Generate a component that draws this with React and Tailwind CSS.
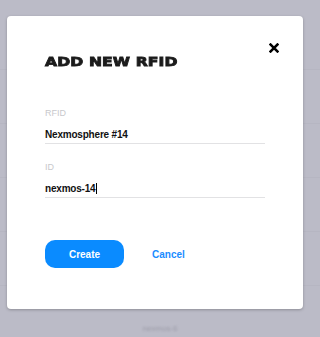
import React, { useState } from "react";

/* ---------- background rows behind the modal (only the last one peeks out) ---------- */
const ROWS = ["", "", "", "", "", "nexmos-6"];

function Field({ label, value, caret = false }) {
  return (
    <div className="flex flex-col">
      <div className="text-[9px] leading-[11px] text-[#c8c8cc]">{label}</div>
      <div className="mt-[9px] flex items-center h-[12px] text-[10px] font-bold text-[#111] tracking-[-0.2px]">
        {value}
        {caret ? <span className="ml-[1px] inline-block w-px h-[11px] bg-black" /> : null}
      </div>
      <div className="mt-[3px] h-px w-[220px] bg-[#e2e2e4]" />
    </div>
  );
}

export default function App() {
  const [rfid] = useState("Nexmosphere #14");
  const [id] = useState("nexmos-14");

  return (
    <div
      className="relative w-[320px] h-[337px] overflow-hidden bg-[#bbbbc7]"
      style={{ fontFamily: '"Liberation Sans", Arial, sans-serif' }}
    >
      {/* list underneath */}
      <div className="flex flex-col pt-[16px]">
        {ROWS.map((r, i) => (
          <div key={i} className="h-[54px] flex items-end justify-center pb-[4px] border-b border-[#b6b6c2]">
            {r ? <span className="text-[8px] text-[#9c9ca8] blur-[1px]">{r}</span> : null}
          </div>
        ))}
      </div>

      {/* modal */}
      <div className="absolute left-[7px] top-[16px] w-[296px] h-[293px] rounded-[4px] bg-white shadow-[0_1px_3px_rgba(0,0,0,0.25)]">
        <button type="button" className="absolute left-[255px] top-[20px] p-[7px]">
          <svg width="10" height="10" viewBox="0 0 10 10" className="block">
            <path d="M1.6 1.6 L8.4 8.4 M8.4 1.6 L1.6 8.4" stroke="#000" strokeWidth="2.6" strokeLinecap="square" />
          </svg>
        </button>

        <div className="flex flex-col items-start pl-[38px] pt-[38px]">
          <h2
            className="w-fit origin-left scale-x-[1.2] text-[13px] leading-[16px] font-bold text-[#1b1b1b] tracking-[0.1px] [-webkit-text-stroke:0.85px_#1b1b1b]"
            style={{ fontFamily: '"DejaVu Sans", sans-serif' }}
          >
            ADD NEW RFID
          </h2>

          <div className="mt-[38px]">
            <Field label="RFID" value={rfid} />
          </div>
          <div className="mt-[18px]">
            <Field label="ID" value={id} caret />
          </div>

          <div className="mt-[42px] flex items-center">
            <button
              type="button"
              className="w-[79px] h-[28px] rounded-[10px] bg-[#0a8bff] text-white text-[10px] font-semibold"
            >
              Create
            </button>
            <button type="button" className="ml-[28px] text-[10px] font-semibold text-[#1a8cff]">
              Cancel
            </button>
          </div>
        </div>
      </div>
    </div>
  );
}
